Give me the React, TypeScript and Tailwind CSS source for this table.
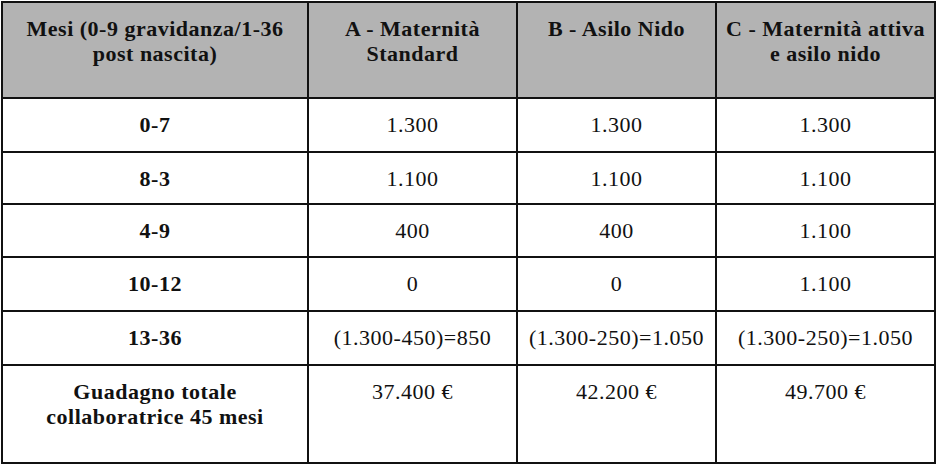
const serif = "font-['Liberation_Serif',serif]";

const rows = [
  { label: "0-7", a: "1.300", b: "1.300", c: "1.300", h: "h-[54px]" },
  { label: "8-3", a: "1.100", b: "1.100", c: "1.100", h: "h-[52px]" },
  { label: "4-9", a: "400", b: "400", c: "1.100", h: "h-[53px]" },
  { label: "10-12", a: "0", b: "0", c: "1.100", h: "h-[54px]" },
  { label: "13-36", a: "(1.300-450)=850", b: "(1.300-250)=1.050", c: "(1.300-250)=1.050", h: "h-[54px]" },
];

const th = "border-2 border-[#111] align-top pt-[13px] px-1 text-center font-bold text-[22px] leading-[25px] tracking-[0.5px] text-[#111]";
const td = "border-2 border-[#111] align-top pt-[13px] px-0 text-center text-[22px] leading-[25px] tracking-[0.5px] text-[#111]";

export default function App() {
  return (
    <div className={`w-[939px] h-[469px] bg-white pl-[1px] pt-[1px] ${serif}`}>
      <table className="border-collapse table-fixed w-[935px]">
        <colgroup>
          <col className="w-[306px]" />
          <col className="w-[209px]" />
          <col className="w-[199px]" />
          <col className="w-[219px]" />
        </colgroup>
        <thead>
          <tr className="h-[96px] bg-[#b3b3b3]">
            <th className={th}>
              Mesi (0-9 gravidanza/1-36
              <br />
              post nascita)
            </th>
            <th className={th}>
              A - Maternità
              <br />
              Standard
            </th>
            <th className={th}>B - Asilo Nido</th>
            <th className={th}>
              C - Maternità attiva
              <br />
              e asilo nido
            </th>
          </tr>
        </thead>
        <tbody>
          {rows.map((r) => (
            <tr key={r.label} className={r.h}>
              <td className={`${td} font-bold`}>{r.label}</td>
              <td className={td}>{r.a}</td>
              <td className={td}>{r.b}</td>
              <td className={td}>{r.c}</td>
            </tr>
          ))}
          <tr className="h-[98px]">
            <td className={`${td} font-bold`}>
              Guadagno totale
              <br />
              collaboratrice 45 mesi
            </td>
            <td className={td}>37.400 €</td>
            <td className={td}>42.200 €</td>
            <td className={td}>49.700 €</td>
          </tr>
        </tbody>
      </table>
    </div>
  );
}
